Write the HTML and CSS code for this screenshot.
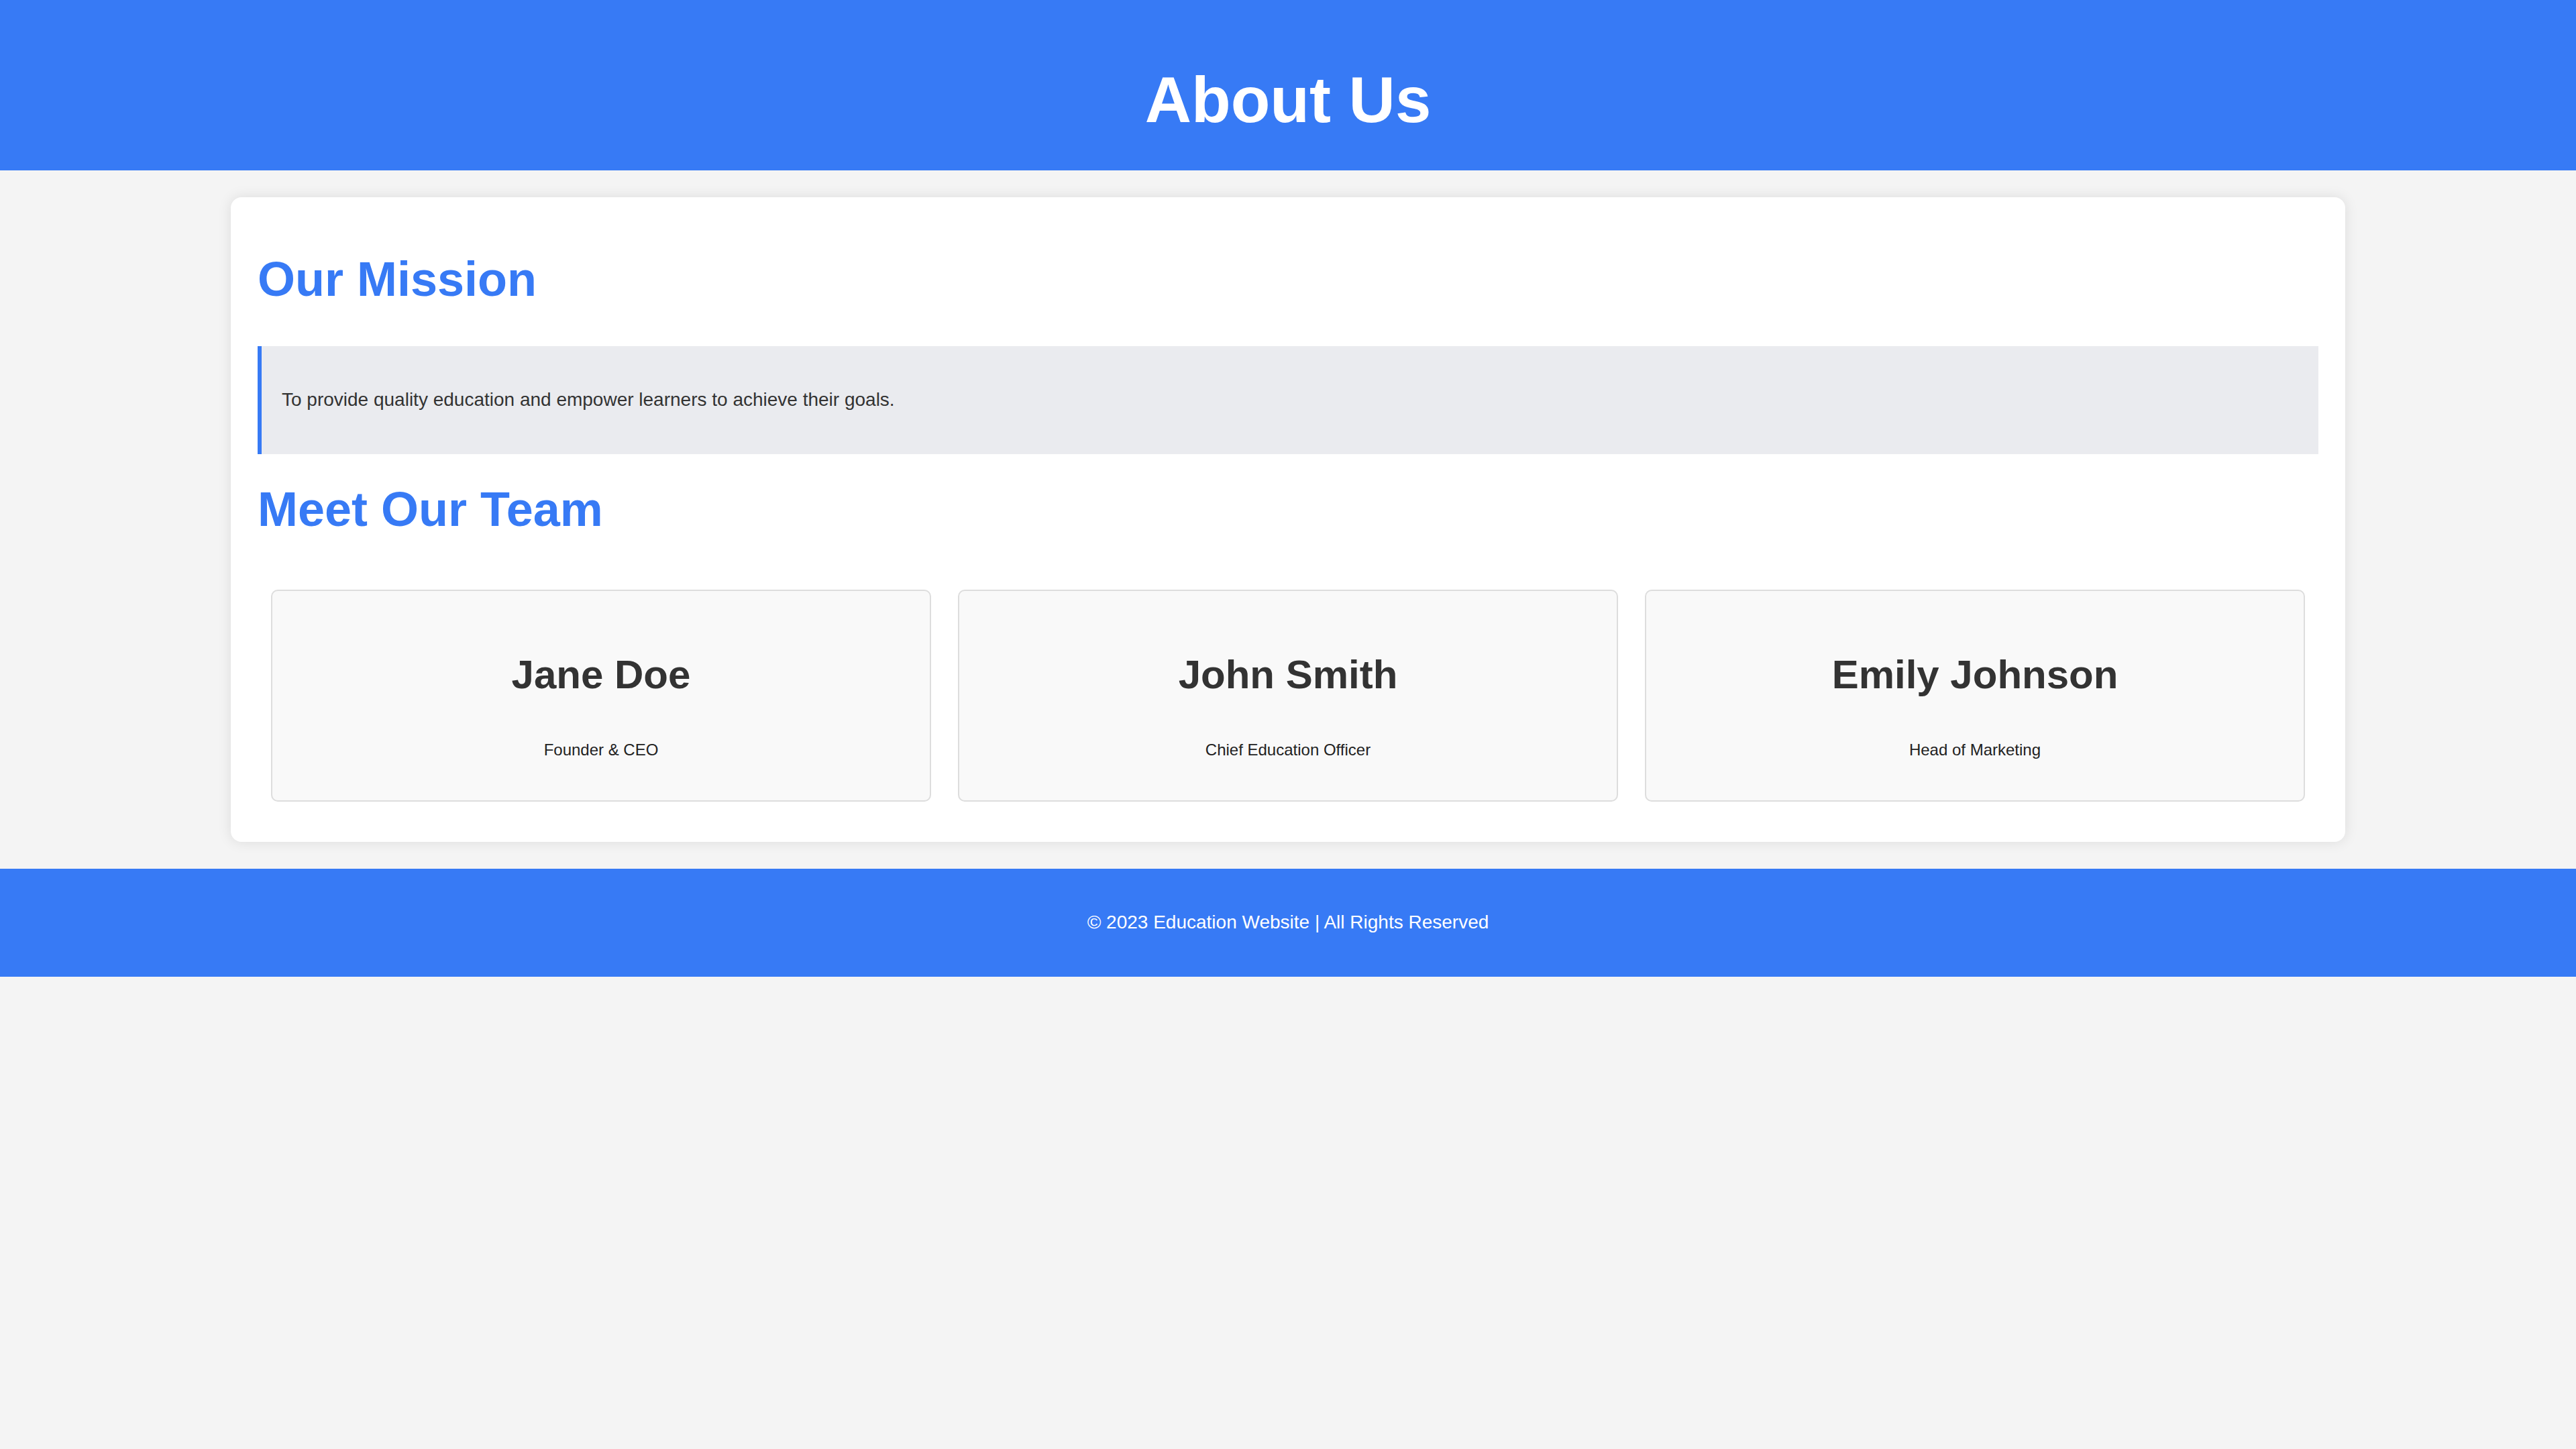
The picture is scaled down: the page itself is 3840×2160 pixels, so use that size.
FILE: index.html
```html
<!DOCTYPE html>
<html lang="en">
<head>
<meta charset="utf-8">
<title>About Us</title>
<link rel="stylesheet" href="styles.css">
</head>
<body>
<header class="site-header">
  <h1 class="site-title">About Us</h1>
</header>
<main class="container">
  <section class="mission">
    <h2 class="section-title">Our Mission</h2>
    <blockquote class="mission-quote">
      <p>To provide quality education and empower learners to achieve their goals.</p>
    </blockquote>
  </section>
  <section class="team">
    <h2 class="section-title">Meet Our Team</h2>
    <div class="team-grid">
      <div class="member">
        <h3 class="member-name">Jane Doe</h3>
        <p class="member-role">Founder &amp; CEO</p>
      </div>
      <div class="member">
        <h3 class="member-name">John Smith</h3>
        <p class="member-role">Chief Education Officer</p>
      </div>
      <div class="member">
        <h3 class="member-name">Emily Johnson</h3>
        <p class="member-role">Head of Marketing</p>
      </div>
    </div>
  </section>
</main>
<footer class="site-footer">
  <p class="footer-text">© 2023 Education Website | All Rights Reserved</p>
</footer>
</body>
</html>
```
FILE: styles.css
```css
html, body {
  margin: 0;
  padding: 0;
}
body {
  background: #f4f4f4;
  color: #333333;
  font-family: "Liberation Sans", Arial, Helvetica, sans-serif;
  font-size: 28px;
  line-height: 1.6;
}
.site-header {
  background: #377af5;
  color: #ffffff;
  text-align: center;
  padding: 94px 0 50px;
}
.site-title {
  margin: 0;
  font-size: 96px;
  font-weight: bold;
  line-height: 110px;
}
.container {
  display: block;
  width: 80%;
  margin: 40px auto;
  padding: 40px;
  background: #ffffff;
  border-radius: 16px;
  box-shadow: 0 0 20px rgba(0, 0, 0, 0.1);
}
.section-title {
  margin: 41px 0 58px;
  font-size: 72px;
  font-weight: bold;
  line-height: 83px;
  color: #377af5;
}
.mission-quote {
  margin: 0;
  padding: 30px;
  background: #eaebef;
  border-left: 6px solid #377af5;
}
.mission-quote p {
  margin: 28px 0;
  font-size: 28px;
  line-height: 44.8px;
}
.team-grid {
  display: flex;
}
.member {
  flex: 1 1 0;
  margin: 20px;
  padding: 40px;
  background: #f9f9f9;
  border: 2px solid #dddddd;
  border-radius: 10px;
  text-align: center;
}
.member-name {
  margin: 37px 0 45px;
  font-size: 60px;
  font-weight: bold;
  line-height: 96px;
  color: #333333;
}
.member-role {
  margin: 0 0 16px;
  font-size: 24px;
  line-height: 38.4px;
  color: #222222;
}
.site-footer {
  background: #377af5;
  color: #ffffff;
  text-align: center;
  padding: 58px 0 58px;
}
.footer-text {
  margin: 0;
  font-size: 28px;
  line-height: 44.8px;
}
```
